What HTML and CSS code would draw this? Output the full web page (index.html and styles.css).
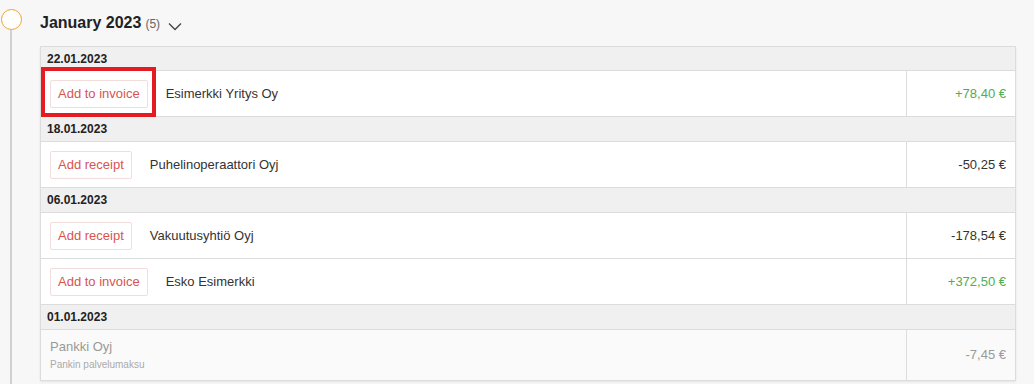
FILE: index.html
```html
<!DOCTYPE html>
<html lang="fi">
<head>
    <meta charset="UTF-8">
    <title>Transactions</title>
    <link rel="stylesheet" href="styles.css">
</head>
<body>
    <div class="month">
        <div class="timeline">
            <div class="dot"></div>
            <div class="line"></div>
        </div>
        <div class="month-body">
            <div class="month-title">
                <span class="name">January 2023</span>
                <span class="count">(5)</span>
                <svg class="chevron" width="14" height="9" viewBox="0 0 14 9"><polyline points="1,1.5 7,7.5 13,1.5" fill="none" stroke="#444" stroke-width="1.3"/></svg>
            </div>
            <table class="tx-table">
                <tr class="date-row"><td colspan="2">22.01.2023</td></tr>
                <tr class="tx-row">
                    <td><div class="desc"><span class="highlight"><button class="action">Add to invoice</button></span><span class="party">Esimerkki Yritys Oy</span></div></td>
                    <td class="amount plus">+78,40 €</td>
                </tr>
                <tr class="date-row"><td colspan="2">18.01.2023</td></tr>
                <tr class="tx-row">
                    <td><div class="desc"><button class="action">Add receipt</button><span class="party">Puhelinoperaattori Oyj</span></div></td>
                    <td class="amount">-50,25 €</td>
                </tr>
                <tr class="date-row"><td colspan="2">06.01.2023</td></tr>
                <tr class="tx-row">
                    <td><div class="desc"><button class="action">Add receipt</button><span class="party">Vakuutusyhtiö Oyj</span></div></td>
                    <td class="amount">-178,54 €</td>
                </tr>
                <tr class="tx-row">
                    <td><div class="desc"><button class="action">Add to invoice</button><span class="party">Esko Esimerkki</span></div></td>
                    <td class="amount plus">+372,50 €</td>
                </tr>
                <tr class="date-row"><td colspan="2">01.01.2023</td></tr>
                <tr class="tx-row muted">
                    <td>
                        <div class="bank-name">Pankki Oyj</div>
                        <div class="bank-note">Pankin palvelumaksu</div>
                    </td>
                    <td class="amount">-7,45 €</td>
                </tr>
            </table>
        </div>
    </div>
</body>
</html>
```

FILE: styles.css
```css
body {
    margin: 0;
    background-color: #f7f7f7;
    font-family: "Liberation Sans", Arial, sans-serif;
    font-size: 13px;
    color: #333;
}
.month {
    display: flex;
    min-height: 384px;
}
.timeline {
    width: 22px;
    display: flex;
    flex-direction: column;
    align-items: center;
    padding-top: 9px;
}
.dot {
    width: 19px;
    height: 19px;
    border: 1.5px solid #f2a22e;
    border-radius: 50%;
    background-color: #fff;
}
.line {
    flex: 1;
    width: 2px;
    background-color: #d0d0d0;
}
.month-body {
    flex: 1;
    margin-left: 18px;
    margin-right: 18px;
}
.month-title {
    display: flex;
    align-items: baseline;
    padding-top: 14px;
    height: 46px;
    box-sizing: border-box;
}
.month-title .name {
    font-size: 16px;
    font-weight: bold;
    color: #222;
}
.month-title .count {
    font-size: 12px;
    color: #666;
    margin-left: 4px;
}
.chevron {
    margin-left: 8px;
    align-self: flex-start;
    margin-top: 8px;
}
.tx-table {
    width: 100%;
    border-collapse: separate;
    border-spacing: 0;
    border: 1px solid #dcdcdc;
    background-color: #fff;
    box-shadow: 0 1px 2px rgba(0,0,0,0.08);
}
.tx-table td {
    border-bottom: 1px solid #dcdcdc;
}
.tx-table tr:last-child td {
    border-bottom: none;
}
.date-row td {
    height: 25px;
    box-sizing: border-box;
    background-color: #f0f0f0;
    font-size: 12px;
    font-weight: bold;
    line-height: 14px;
    padding: 4px 6px;
    color: #222;
}
.tx-table tr:first-child td {
    height: 24px;
}
.tx-row td {
    height: 46px;
    box-sizing: border-box;
    padding: 0 9px;
    line-height: 14px;
    vertical-align: middle;
}
.desc {
    display: flex;
    align-items: center;
}
.tx-row .amount {
    width: 109px;
    border-left: 1px solid #dcdcdc;
    text-align: right;
    white-space: nowrap;
}
.amount.plus {
    color: #4cae5a;
}
.action {
    height: 28px;
    box-sizing: border-box;
    font-family: inherit;
    font-size: 13px;
    line-height: 14px;
    padding: 0 7px;
    color: #d9534f;
    background-color: #fff;
    border: 1px solid #f2dcdc;
    border-radius: 2px;
    cursor: pointer;
}
.party {
    margin-left: 18px;
    color: #333;
}
.highlight {
    position: relative;
    display: inline-flex;
}
.highlight::after {
    content: "";
    position: absolute;
    left: -9px;
    top: -13px;
    right: -8px;
    bottom: -9px;
    border: 4px solid #e31b23;
}
.tx-row.muted td {
    height: 50px;
    background-color: #fafafa;
    color: #999;
}
.bank-name {
    font-size: 13px;
    line-height: 16px;
}
.bank-note {
    font-size: 10px;
    line-height: 13px;
    margin-top: 3px;
    color: #aaa;
}
```
